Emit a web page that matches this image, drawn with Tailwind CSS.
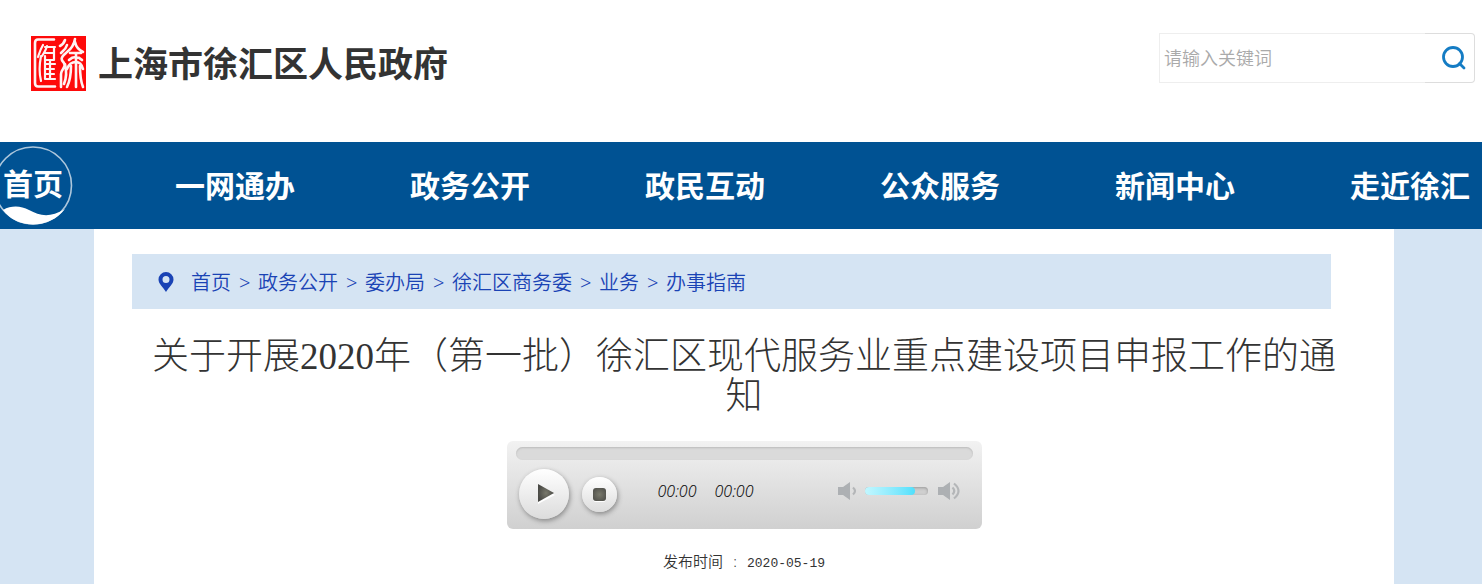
<!DOCTYPE html>
<html lang="zh-CN">
<head>
<meta charset="utf-8">
<meta name="viewport" content="width=device-width, initial-scale=1">
<title>上海市徐汇区人民政府</title>
<script src="https://cdn.jsdelivr.net/npm/@tailwindcss/browser@4"></script>
</head>
<body class="flex min-h-screen flex-col bg-white font-['Noto_Sans','Noto_Sans_CJK_SC',sans-serif]">
<header class="flex h-[142px] items-start justify-between pr-[7px] pl-[31px]">
  <a href="#" class="mt-9 flex items-center gap-3">
    <svg class="size-[55px]" viewBox="0 0 55 55" fill="none" stroke="#fff3f3" stroke-width="2.6" stroke-linecap="round" stroke-linejoin="round" aria-hidden="true">
      <rect width="55" height="55" fill="#fe0a0a" stroke="none"/>
      <path d="M23 3.500H7Q4 3.500 4 7V47Q4 50.500 7 50.500H24"/>
      <path d="M12 9C9 14 8 18 7 21M10 20C8 30 8 37 10 45M16 10C15 14 13 17 11 20M14 20V43M14 11H24M23 11V24H14M14 17H22M14 28H24M14 33H23M14 38H23M14 43H24M19 25V43" stroke-width="2.200"/>
      <path d="M34 4C33 7 31 9 29 10M36 9C35 13 32 15 30 17M35 17C29 22 30 24 33 27C36 31 30 33 30 38V51M34 28C36 36 35 43 33 48"/>
      <path d="M44 3C43 9 40 13 36 16M44 6C45 11 48 14 52 16M39 17H50M38 24C42 20 47 20 51 24M45 17V51M36 33C38 27 42 26 45 26C49 26 51 29 52 33M40 30C40 38 39 45 36 51M49 30C49 39 50 46 52 51"/>
    </svg>
    <span class="text-[35px] leading-[55px] font-bold text-[#333]">上海市徐汇区人民政府</span>
  </a>
  <form class="mt-[33px] flex h-[50px] w-[316px]" role="search">
    <input type="search" aria-label="请输入关键词" placeholder="请输入关键词" class="min-w-0 flex-1 border border-r-0 border-[#eee] px-1 text-[18px] font-[350] outline-none placeholder:text-[#aaa]">
    <button type="button" aria-label="搜索" class="flex w-[50px] items-center justify-center rounded-r-[4px] border border-l-0 border-[#ddd] pl-[8px]">
      <svg class="size-[26px]" viewBox="0 0 26 26" fill="none" stroke="#147cc4" stroke-width="2.800" stroke-linecap="round"><circle cx="12" cy="12" r="9.500"/><path d="M18.500 18.500L23 23"/></svg>
    </button>
  </form>
</header>
<nav class="flex h-[87px] items-center justify-between overflow-hidden bg-[#005293] pr-3 text-[30px] leading-[44px] font-bold whitespace-nowrap text-white" aria-label="主导航">
  <a href="#" class="relative flex h-[87px] w-[120px] items-center pb-1 pl-[3px]">
    <svg class="absolute top-[4px] left-[-7px] size-[80px]" viewBox="0 0 80 80" aria-hidden="true"><circle cx="40" cy="39.500" r="38.500" fill="none" stroke="#adc7dc" stroke-width="1.600"/><path d="M10 64C19 59 28 60 36 64C47 70 57 72 72 63C57 83 25 84 10 64Z" fill="#fff"/></svg>
    <span class="relative">首页</span>
  </a>
  <a href="#" class="-ml-[60px]">一网通办</a>
  <a href="#">政务公开</a>
  <a href="#">政民互动</a>
  <a href="#">公众服务</a>
  <a href="#">新闻中心</a>
  <a href="#">走近徐汇</a>
</nav>
<div class="flex flex-1 bg-[#d5e4f3] pr-[88px] pl-[94px]">
<main class="flex flex-1 flex-col items-center bg-white pt-[25px]">
  <div class="w-full pr-[63px] pl-[38px]">
    <nav class="flex h-[55px] items-center bg-[#d5e4f3] pl-[26px] text-[20px] font-[350] text-[#1a43b5]" aria-label="面包屑">
      <svg class="mr-[17px] h-[20px] w-[16px]" viewBox="0 0 16 20" aria-hidden="true"><path fill="#1a43b5" fill-rule="evenodd" d="M8 0A7.500 7.500 0 0 0 .500 7.500C.500 12 5 15 8 20C11 15 15.500 12 15.500 7.500A7.500 7.500 0 0 0 8 0ZM8 4A3.500 3.500 0 1 1 8 11A3.500 3.500 0 1 1 8 4Z"/></svg>
      <ol class="flex items-center gap-2 pt-[2px]">
        <li><a href="#">首页</a></li><li aria-hidden="true" class="w-[11px]">&gt;</li>
        <li><a href="#">政务公开</a></li><li aria-hidden="true" class="w-[11px]">&gt;</li>
        <li><a href="#">委办局</a></li><li aria-hidden="true" class="w-[11px]">&gt;</li>
        <li><a href="#">徐汇区商务委</a></li><li aria-hidden="true" class="w-[11px]">&gt;</li>
        <li><a href="#">业务</a></li><li aria-hidden="true" class="w-[11px]">&gt;</li>
        <li><a href="#">办事指南</a></li>
      </ol>
    </nav>
  </div>
  <h1 class="mt-[28px] px-12 text-center font-['Liberation_Serif','Noto_Sans_CJK_SC',serif] text-[37px] leading-[40px] font-light text-[#333]">关于开展2020年（第一批）徐汇区现代服务业重点建设项目申报工作的通知</h1>
  <section aria-label="音频播放器" class="mt-6 h-[88px] w-full max-w-[475px] rounded-[6px] bg-linear-to-b from-[#f2f2f2] to-[#d0d0d0] px-[9px] pt-[6px]">
    <div role="progressbar" aria-label="播放进度" aria-valuenow="0" class="h-[13px] rounded-full bg-[#dadada] shadow-[inset_0_1px_2px_#bbb]"></div>
    <div class="flex h-[68px] items-center pl-[3px]">
      <button type="button" aria-label="播放" class="flex size-[50px] items-center justify-center rounded-full bg-linear-to-b from-white to-[#dcdcdc] shadow-[1px_2px_5px_#888]">
        <svg class="ml-[4px] h-[20px] w-[18px]" viewBox="0 0 18 20"><defs><radialGradient id="dark"><stop stop-color="#79796c"/><stop offset="1" stop-color="#4a4a46"/></radialGradient></defs><path d="M1 2V20L18 11Z" fill="#fff"/><path d="M1 0V18L17 9Z" fill="url(#dark)"/></svg>
      </button>
      <button type="button" aria-label="停止" class="ml-[13px] flex size-[35px] items-center justify-center rounded-full bg-linear-to-b from-white to-[#dcdcdc] shadow-[1px_2px_5px_#888]">
        <span class="size-[13px] rounded-[3px] bg-radial from-[#79796c] to-[#4a4a46] shadow-[0_1px_0_#fff]"></span>
      </button>
      <div class="mb-[6px] ml-[41px] flex gap-[18px] text-[16px] leading-[22px] font-[350] text-[#111] italic"><time>00:00</time><time>00:00</time></div>
      <div class="mb-[6px] ml-auto flex items-center pr-3">
        <svg class="h-[20px] w-[22px]" viewBox="0 0 22 20" aria-hidden="true"><path d="M1 6H6L13 1V19L6 14H1Z" fill="#adb0b3"/><path d="M16 6.500Q20 10 16 13.500" fill="none" stroke="#b4b6b8" stroke-width="2.200"/></svg>
        <div role="meter" aria-label="音量" aria-valuenow="80" aria-valuemin="0" aria-valuemax="100" class="ml-[6px] h-[8px] w-[63px] rounded-full bg-[#cfcfcf] shadow-[inset_0_1px_3px_#999]"><div class="h-full rounded-full bg-linear-to-r from-[#c2f7ff] to-[#4ee0fc]" style="width:80%"></div></div>
        <svg class="ml-[9px] h-[20px] w-[24px]" viewBox="0 0 24 20" aria-hidden="true"><path d="M1 6H6L13 1V19L6 14H1Z" fill="#adb0b3"/><path d="M15.500 6.500Q19 10 15.500 13.500M17 2.500Q26 10 17 17.500" fill="none" stroke="#b4b6b8" stroke-width="2.200"/></svg>
      </div>
    </div>
  </section>
  <p class="mt-[22px] flex items-baseline text-[15px] leading-[20px] font-[350] text-[#333]">发布时间<span class="w-[24px] text-center">:</span><time datetime="2020-05-19" class="font-['Liberation_Mono',monospace] text-[13px]">2020-05-19</time></p>
</main>
</div>
</body>
</html>
